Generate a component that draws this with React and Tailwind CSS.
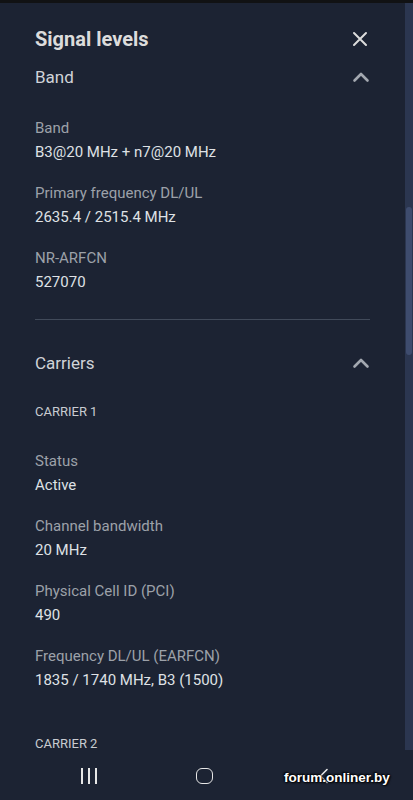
import React from "react";

const Pair = ({ label, value, className = "" }) => (
  <div className={className}>
    <div className="text-[15px] leading-[20px] text-[#9ca1a9]">{label}</div>
    <div className="mt-[4px] text-[15px] leading-[20px] text-[#dfe1e5]">{value}</div>
  </div>
);

const ChevronUp = () => (
  <svg width="18" height="18" viewBox="0 0 18 18" fill="none">
    <path d="M2.5 12.5 L9 6 L15.5 12.5" stroke="#a3a8b0" strokeWidth="2.6" strokeLinecap="round" strokeLinejoin="round" />
  </svg>
);

export default function App() {
  return (
    <div
      className="relative w-[413px] h-[800px] overflow-hidden bg-[#1c2333] flex flex-col"
      style={{ fontFamily: "Roboto, 'Noto Sans', sans-serif" }}
    >
      <div className="h-[3px] bg-[#111214] shrink-0" />
      <div className="flex h-[747px] shrink-0">
        <div className="flex-1 overflow-hidden px-[35px]">
          <div className="mt-[24px] flex h-[24px] items-center justify-between">
            <div className="text-[20px] leading-[24px] font-bold text-[#dcdcdc]">Signal levels</div>
            <div className="flex h-[20px] w-[20px] items-center justify-center">
              <svg width="16" height="16" viewBox="0 0 16 16" fill="none">
                <path d="M2 2 L14 14 M14 2 L2 14" stroke="#dcdcdc" strokeWidth="2" strokeLinecap="round" />
              </svg>
            </div>
          </div>

          <div className="mt-[14px] flex h-[24px] items-center justify-between">
            <div className="text-[17px] leading-[24px] text-[#d0d3d8]">Band</div>
            <ChevronUp />
          </div>

          <Pair className="mt-[29px]" label="Band" value="B3@20 MHz + n7@20 MHz" />
          <Pair className="mt-[21px]" label="Primary frequency DL/UL" value="2635.4 / 2515.4 MHz" />
          <Pair className="mt-[21px]" label="NR-ARFCN" value="527070" />

          <div className="mt-[27px] h-px bg-[#414a5a]" />

          <div className="mt-[31px] flex h-[24px] items-center justify-between">
            <div className="text-[17px] leading-[24px] text-[#d0d3d8]">Carriers</div>
            <ChevronUp />
          </div>

          <div className="mt-[27px] text-[13px] leading-[20px] text-[#c9ccd1]">CARRIER 1</div>

          <Pair className="mt-[29px]" label="Status" value="Active" />
          <Pair className="mt-[21px]" label="Channel bandwidth" value="20 MHz" />
          <Pair className="mt-[21px]" label="Physical Cell ID (PCI)" value="490" />
          <Pair className="mt-[21px]" label="Frequency DL/UL (EARFCN)" value="1835 / 1740 MHz, B3 (1500)" />

          <div className="mt-[48px] text-[13px] leading-[12px] text-[#c9ccd1]">CARRIER 2</div>
        </div>
        <div className="w-[8px] bg-[#2b3650] flex flex-col">
          <div className="mt-[204px] mx-[1px] h-[148px] rounded-full bg-[#3e4c6e]" />
        </div>
      </div>

      <div className="flex flex-1 items-center">
        <div className="flex w-full items-center pt-[2px]">
          <div className="ml-[81px] flex h-[16px] gap-[5.5px]">
            <div className="w-[1.6px] bg-[#e6e6e6]" />
            <div className="w-[1.6px] bg-[#e6e6e6]" />
            <div className="w-[1.6px] bg-[#e6e6e6]" />
          </div>
          <div className="ml-[99px] h-[16px] w-[17px] rounded-[6px] border-[1.6px] border-[#e6e6e6]" />
          <div className="ml-[105px]">
            <svg width="12" height="16" viewBox="0 0 12 16" fill="none">
              <path d="M9 1.5 L2.5 8 L9 14.5" stroke="#e6e6e6" strokeWidth="1.6" strokeLinecap="round" strokeLinejoin="round" />
            </svg>
          </div>
        </div>
      </div>

      <div
        className="absolute left-[284px] top-[769px] text-[13.5px] leading-[18px] font-bold text-white"
        style={{
          fontFamily: "'Liberation Sans', Arial, sans-serif",
          textShadow: "0 0 2px #000, 1px 1px 2px #000, -1px -1px 2px #000",
        }}
      >
        forum.onliner.by
      </div>
    </div>
  );
}
